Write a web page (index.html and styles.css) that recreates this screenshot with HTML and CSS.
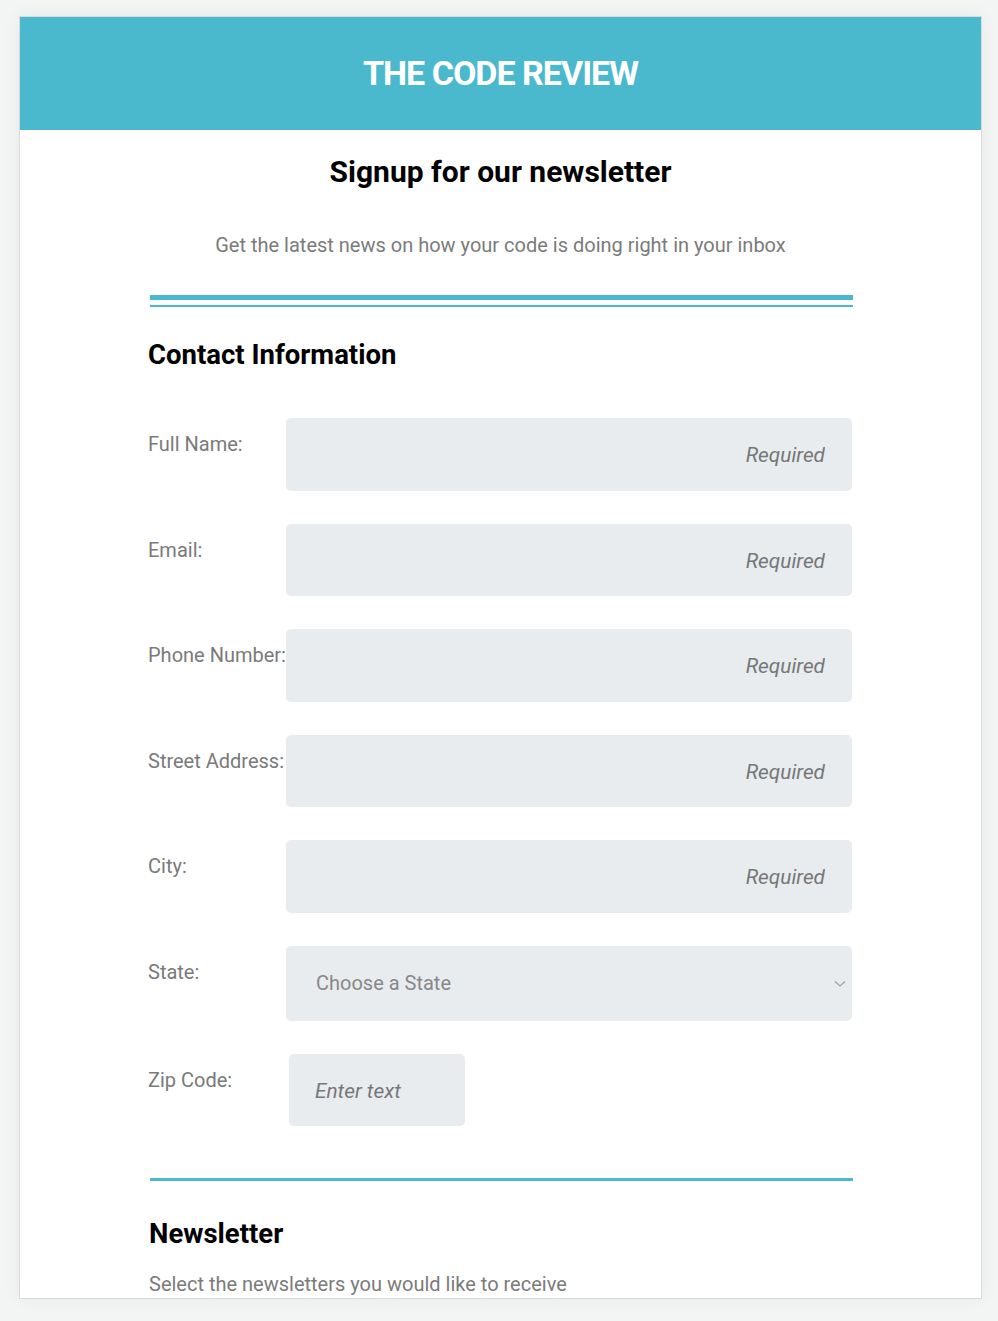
FILE: index.html
```html
<!DOCTYPE html>
<html lang="en">
<head>
<meta charset="utf-8">
<title>The Code Review</title>
<link rel="stylesheet" href="styles.css">
</head>
<body>
<div class="card">
  <header class="masthead"><h1 class="brand">THE CODE REVIEW</h1></header>
  <main class="content">
    <h2 class="title">Signup for our newsletter</h2>
    <p class="lead">Get the latest news on how your code is doing right in your inbox</p>
    <div class="double-rule"></div>
    <h3 class="section-title">Contact Information</h3>
    <form class="form">
      <div class="row"><label class="label">Full Name:</label><input class="field" type="text" placeholder="Required"></div>
      <div class="row"><label class="label">Email:</label><input class="field" type="text" placeholder="Required"></div>
      <div class="row"><label class="label">Phone Number:</label><input class="field" type="text" placeholder="Required"></div>
      <div class="row"><label class="label">Street Address:</label><input class="field" type="text" placeholder="Required"></div>
      <div class="row"><label class="label">City:</label><input class="field" type="text" placeholder="Required"></div>
      <div class="row"><label class="label">State:</label>
        <div class="select-wrap">
          <select class="select"><option>Choose a State</option></select>
          <svg class="chevron" width="12" height="8" viewBox="0 0 12 8"><path d="M1 1.5 L6 6 L11 1.5" fill="none" stroke="#9aa0a4" stroke-width="1.2"/></svg>
        </div>
      </div>
      <div class="row"><label class="label">Zip Code:</label><input class="field zip" type="text" placeholder="Enter text"></div>
    </form>
    <div class="single-rule"></div>
    <h3 class="section-title news">Newsletter</h3>
    <p class="note">Select the newsletters you would like to receive</p>
  </main>
</div>
</body>
</html>
```

FILE: styles.css
```css
* { box-sizing: border-box; }
html, body { margin: 0; padding: 0; }
body {
  background: #f3f4f4;
  font-family: Roboto, "Liberation Sans", sans-serif;
  padding: 16px 17px 0 19px;
  height: 1321px;
  overflow: hidden;
}
.card {
  width: 963px;
  height: 1283px;
  background: #fff;
  border: 1px solid #d8dbdc;
  box-shadow: 0 0 18px rgba(0,0,0,0.05);
  overflow: hidden;
}
.masthead {
  background: #4ab9cd;
  height: 113px;
  display: flex;
  align-items: center;
  justify-content: center;
}
.brand {
  margin: 0 0 2px;
  color: #fff;
  font-size: 34px;
  font-weight: 700;
  letter-spacing: -1px;
}
.content {
  width: 705px;
  margin: 0 auto;
}
.title {
  margin: 24px 0 0;
  text-align: center;
  font-size: 30px;
  font-weight: 700;
  line-height: 36px;
  color: #000;
}
.lead {
  margin: 43px 0 0;
  text-align: center;
  font-size: 20px;
  line-height: 24px;
  color: #7b7b7b;
}
.double-rule {
  margin: 38px 0 0 2px;
  width: 703px;
  height: 12px;
  border-top: 5px solid #4ab9cd;
  border-bottom: 2px solid #4ab9cd;
}
.section-title {
  margin: 32px 0 0;
  font-size: 27.5px;
  font-weight: 700;
  line-height: 32px;
  color: #000;
}
.form {
  margin-top: 47px;
  display: flex;
  flex-direction: column;
  gap: 33px;
}
.row {
  display: flex;
  align-items: flex-start;
}
.label {
  width: 138px;
  flex: none;
  padding-top: 14px;
  font-size: 20px;
  line-height: 24px;
  color: #7a7a7a;
  white-space: nowrap;
}
.field {
  width: 566px;
  height: 72.5px;
  border: none;
  border-radius: 5px;
  background: #e8ecee;
  font-family: inherit;
  font-size: 20.8px;
  font-style: italic;
  text-align: right;
  padding: 2px 27px 0;
  color: #555;
  outline: none;
}
.field::placeholder { color: #777; font-style: italic; }
.field.zip {
  width: 176px;
  margin-left: 3px;
  text-align: left;
  padding-left: 26px;
  padding-top: 2px;
}
.select-wrap { position: relative; }
.select {
  appearance: none;
  -webkit-appearance: none;
  width: 566px;
  height: 75px;
  border: none;
  border-radius: 5px;
  background: #e8ecee;
  font-family: inherit;
  font-size: 20px;
  color: #888;
  padding: 0 30px;
  outline: none;
}
.chevron {
  position: absolute;
  right: 6px;
  top: 34px;
}
.single-rule {
  margin: 52px 0 0 2px;
  width: 703px;
  height: 3px;
  background: #4ab9cd;
}
.section-title.news {
  margin-top: 37px;
  margin-left: 1px;
}
.note {
  margin: 22px 0 0 1px;
  font-size: 20px;
  line-height: 24px;
  color: #7b7b7b;
}
```
